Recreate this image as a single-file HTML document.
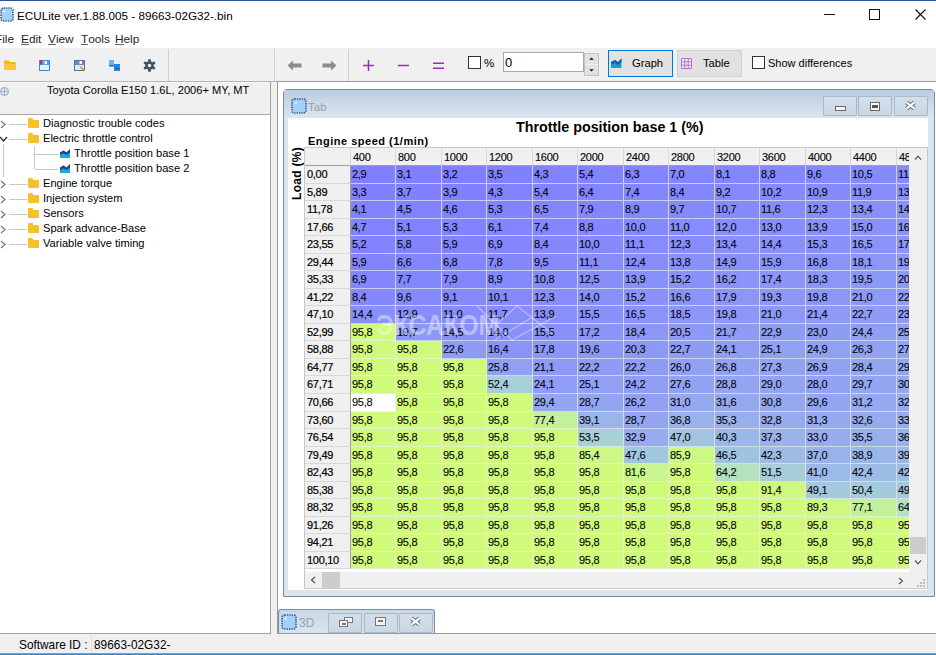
<!DOCTYPE html>
<html><head><meta charset="utf-8">
<style>
*{box-sizing:border-box}
html,body{margin:0;padding:0}
body{width:936px;height:655px;overflow:hidden;position:relative;background:#fff;font-family:"Liberation Sans",sans-serif;color:#000}
.a{position:absolute}
.t{position:absolute;white-space:pre;line-height:1}
/* title */
#topline{left:0;top:0;width:936px;height:1px;background:#2d5193}
.ico{position:absolute;background:#9cc8f4;border:1.5px dotted #3e5f8e;border-radius:3px}
#title{left:17px;top:10px;font-size:11.7px;color:#000}
/* menu */
.menu{top:34px;font-size:11.8px;color:#1e1e1e}
.menu u{text-decoration:none;border-bottom:1px solid #666;display:inline-block;line-height:10px}
/* toolbar */
#toolbar{left:0;top:48px;width:936px;height:33px;background:#f0f0f0}
#tbline{left:0;top:81px;width:936px;height:1px;background:#b4b4b4}
.sep{position:absolute;top:49px;width:1px;height:32px;background:#cfcfcf}
/* left panel */
#lp{left:0;top:82px;width:271px;height:552px;background:#fff;border-right:1px solid #a0a0a0;border-bottom:1px solid #a0a0a0}
#lph{left:0;top:82px;width:270px;height:33px;background:#f0f0f0;border-bottom:1px solid #a8a8a8;border-top:1px solid #fafafa}
.tree{position:absolute;font-size:11.1px;color:#000;white-space:pre;line-height:1}
.fold{position:absolute;width:11px;height:8px;background:#f6c026;border-radius:1px}
.fold:before{content:"";position:absolute;left:0;top:-2px;width:5px;height:3px;background:#f6c026;border-radius:1px 1px 0 0}
.hl{position:absolute;height:1px;background:#c8c8c8}
.vl{position:absolute;width:1px;background:#c8c8c8}
/* splitter */
#split{left:271px;top:82px;width:6px;height:552px;background:#f0f0f0}
/* MDI */
#mdi{left:277px;top:81px;width:660px;height:553px;background:#fff;border:1px solid #9a9a9a;border-right:none}
#status{left:0;top:634px;width:936px;height:20px;background:#f0f0f0}
#botline{left:0;top:653px;width:936px;height:2px;background:linear-gradient(#8fb3da,#2a6db5)}
/* child */
#child{left:283px;top:89px;width:652px;height:508px;border:1px solid #7a8a9c;border-radius:4px 4px 0 0;background:#d9e5f1}
#ctitle{left:284px;top:90px;width:650px;height:28px;background:linear-gradient(#bccde0,#dae5f0)}
#content{left:288px;top:118px;width:640px;height:472px;background:#fff}
.cbtn{position:absolute;top:96px;height:20px;border:1px solid #a9b9ca;border-radius:1px;background:linear-gradient(#d3dfeb,#c9d7e5)}
/* table */
#tv{left:304px;top:147px;width:624px;height:442px;border:1px solid #c8c8c8;background:#fff;overflow:hidden}
#grid{position:absolute;left:0;top:0;width:604px;height:423px;overflow:hidden}
.rh{position:absolute;-webkit-text-stroke:.2px #000;left:0;width:46px;background:#f0f0f0;border-bottom:1px solid #d8d8d8;border-right:1px solid #a0a0a0;font-size:11px;letter-spacing:-.3px;padding:2px 0 0 2px;line-height:12px;white-space:pre;color:#000}
.c{position:absolute;-webkit-text-stroke:.1px #101030;border-right:1px solid rgba(235,235,235,.7);border-bottom:1px solid rgba(235,235,235,.7);font-size:11px;letter-spacing:-.3px;padding:2px 0 0 1px;line-height:12px;white-space:pre;color:#000}
.ch{position:absolute;-webkit-text-stroke:.15px #222;top:0;height:18px;background:#f0f0f0;border-right:1px solid #d8d8d8;border-bottom:1px solid #a0a0a0;font-size:11px;letter-spacing:-.3px;padding:3px 0 0 2px;line-height:12px;white-space:pre;color:#000}
#corner{left:0;top:0;width:46px;height:18px;background:#f0f0f0;border-right:1px solid #d8d8d8;border-bottom:1px solid #a0a0a0}
#vsb{left:604px;top:0;width:18px;height:423px;background:#f0f0f0}
#hsb{left:0;top:423px;width:604px;height:17px;background:#f0f0f0;border-top:1px solid #fff}
#sbcorner{left:604px;top:423px;width:18px;height:17px;background:#f0f0f0}
</style></head><body>
<div class="a" id="topline"></div>
<svg class="a" style="left:0px;top:7px" width="14" height="15" viewBox="0 0 14 15"><rect x="1" y="1" width="12" height="13" rx="2.5" fill="#a4d0fa" stroke="#3d5f92" stroke-width="1.7" stroke-dasharray="1.4 1"/><circle cx="4.2" cy="4.5" r="1.2" fill="#d8ecff"/></svg>
<div class="t" id="title">ECULite ver.1.88.005 - 89663-02G32-.bin</div>
<!-- window buttons -->
<div class="a" style="left:824px;top:14px;width:11px;height:1px;background:#111"></div>
<div class="a" style="left:869px;top:9px;width:11px;height:11px;border:1px solid #111"></div>
<svg class="a" style="left:915px;top:9px" width="11" height="11" viewBox="0 0 11 11"><path d="M0.5 0.5L10.5 10.5M10.5 0.5L0.5 10.5" stroke="#111" stroke-width="1.1"/></svg>
<!-- menu -->
<div class="t menu" style="left:-5px">F<span style="opacity:1">ile</span></div>
<div class="t menu" style="left:21px"><u>E</u>dit</div>
<div class="t menu" style="left:48px"><u>V</u>iew</div>
<div class="t menu" style="left:81px"><u>T</u>ools</div>
<div class="t menu" style="left:115px"><u>H</u>elp</div>
<!-- toolbar -->
<div class="a" id="toolbar"></div>
<div class="a" id="tbline"></div>
<div class="sep" style="left:168px"></div>
<div class="sep" style="left:274px"></div>
<div class="sep" style="left:348px"></div>
<!-- left toolbar icons -->
<svg class="a" style="left:3px;top:59px" width="14" height="12" viewBox="0 0 14 12"><path d="M1 2.5Q1 1.5 2 1.5H5.5L7 3H12Q13 3 13 4V10.5Q13 11 12.5 11H1.5Q1 11 1 10.5Z" fill="#f5b70f"/><path d="M1 5H13V10.5Q13 11 12.5 11H1.5Q1 11 1 10.5Z" fill="#fbc83a"/></svg>
<svg class="a" style="left:38px;top:59px" width="13" height="13" viewBox="0 0 13 13"><rect x="1.5" y="1.5" width="10" height="10" fill="#e8f2fb" stroke="#3d8ad4"/><rect x="2" y="2" width="9" height="4" fill="#5a9fe0"/><rect x="2" y="1" width="2" height="4.5" fill="#c8303a"/><rect x="6.5" y="2" width="2.5" height="3" fill="#f4f4f4"/><rect x="2" y="7" width="9" height="4" fill="#f2ecec"/></svg>
<svg class="a" style="left:73px;top:59px" width="13" height="13" viewBox="0 0 13 13"><rect x="1.5" y="1.5" width="10" height="10" fill="#dde9f4" stroke="#4f74a0"/><rect x="2" y="2" width="9" height="4" fill="#6a8cb4"/><rect x="6.5" y="2" width="2.5" height="3" fill="#f4f4f4"/><path d="M7 7.5L11.5 12" stroke="#c9a227" stroke-width="1.6"/></svg>
<svg class="a" style="left:108px;top:59px" width="13" height="13" viewBox="0 0 13 13"><rect x="1" y="1" width="5" height="7" fill="#6db5ee"/><rect x="6" y="5" width="6" height="7" fill="#2a86da"/><path d="M1.5 6.5H5.5M7 9.5H11" stroke="#1a5a9a" stroke-width="1"/></svg>
<svg class="a" style="left:143px;top:59px" width="13" height="13" viewBox="0 0 14 14"><g fill="#3b5466"><circle cx="7" cy="7" r="4.6"/><rect x="5.5" y="0.3" width="3" height="13.4" rx=".6"/><rect x="5.5" y="0.3" width="3" height="13.4" rx=".6" transform="rotate(60 7 7)"/><rect x="5.5" y="0.3" width="3" height="13.4" rx=".6" transform="rotate(-60 7 7)"/></g><circle cx="7" cy="7" r="1.9" fill="#f0f0f0"/></svg>
<!-- right toolbar -->
<svg class="a" style="left:287px;top:59px" width="15" height="13" viewBox="0 0 15 13"><path d="M0.5 6.5L6 1.5V4.5H14.5V8.5H6V11.5Z" fill="#8c8c8c"/></svg>
<svg class="a" style="left:322px;top:59px" width="15" height="13" viewBox="0 0 15 13"><path d="M14.5 6.5L9 1.5V4.5H0.5V8.5H9V11.5Z" fill="#8c8c8c"/></svg>
<svg class="a" style="left:362px;top:59px" width="13" height="13" viewBox="0 0 13 13"><path d="M6.5 1V12M1 6.5H12" stroke="#9a2cc4" stroke-width="1.5"/></svg>
<svg class="a" style="left:397px;top:59px" width="13" height="13" viewBox="0 0 13 13"><path d="M1 6.5H12" stroke="#9a2cc4" stroke-width="1.5"/></svg>
<svg class="a" style="left:432px;top:59px" width="13" height="13" viewBox="0 0 13 13"><path d="M1 4.2H12M1 9.2H12" stroke="#9a2cc4" stroke-width="1.5"/></svg>
<div class="a" style="left:468px;top:56px;width:13px;height:13px;border:1px solid #333;background:#fff"></div>
<div class="t" style="left:484px;top:58px;font-size:11.5px">%</div>
<div class="a" style="left:503px;top:52px;width:81px;height:20px;border:1px solid #a8a8a8;background:#fff"></div>
<div class="t" style="left:505px;top:56px;font-size:13px">0</div>
<div class="a" style="left:584px;top:53px;width:15px;height:23px;background:#e2e2e2;border:1px solid #c2c2c2"></div>
<div class="a" style="left:585px;top:64px;width:13px;height:1px;background:#efefef"></div>
<svg class="a" style="left:588px;top:57px" width="7" height="16" viewBox="0 0 7 16"><path d="M1.2 2.8L3.5 0.6L5.8 2.8Z M1.2 12.2L3.5 14.4L5.8 12.2Z" fill="#111"/></svg>
<div class="a" style="left:608px;top:50px;width:65px;height:27px;border:1px solid #0078d7;background:#e2e2e2"></div>
<svg class="a" style="left:611px;top:58px" width="11" height="10" viewBox="0 0 11 10"><path d="M0 4L4 2L7 4L10.5 0.5V10H0Z" fill="#1aa0c8"/><path d="M0 4L4 2L7 4L10.5 0.5V4L7 7L4 5L0 7Z" fill="#1f5fa8"/></svg>
<div class="t" style="left:632px;top:58px;font-size:11.2px">Graph</div>
<div class="a" style="left:677px;top:50px;width:65px;height:27px;border:1px solid #d0d0d0;background:#e1e1e1"></div>
<svg class="a" style="left:681px;top:58px" width="11" height="11" viewBox="0 0 11 11"><rect x="0.5" y="0.5" width="10" height="10" fill="#f4ecfb"/><path d="M0.5 0.5H10.5V10.5H0.5Z M0.5 3.8H10.5M0.5 7.2H10.5M3.8 0.5V10.5M7.2 0.5V10.5" stroke="#a866d8" fill="none" stroke-width=".9"/></svg>
<div class="t" style="left:703px;top:58px;font-size:11.2px">Table</div>
<div class="a" style="left:752px;top:56px;width:13px;height:13px;border:1px solid #333;background:#fff"></div>
<div class="t" style="left:768px;top:58px;font-size:11px">Show differences</div>
<!-- left panel -->
<div class="a" id="lp"></div>
<div class="a" id="lph"></div>
<svg class="a" style="left:0;top:86px" width="10" height="11" viewBox="0 0 10 11"><circle cx="4.5" cy="5.5" r="4" fill="#dde3f0" stroke="#9aa6c8"/><path d="M4.5 2V9M1 5.5H8" stroke="#9aa6c8" stroke-width=".8"/></svg>
<div class="t" style="left:47px;top:85px;font-size:11.1px">Toyota Corolla E150 1.6L, 2006+ MY, MT</div>
<svg class="a" style="left:0;top:120px" width="6" height="9" viewBox="0 0 6 9"><path d="M1 1L5 4.5L1 8" stroke="#777" stroke-width="1.2" fill="none"/></svg>
<div class="hl" style="left:9px;top:124px;width:18px"></div>
<div class="fold" style="left:28px;top:120px"></div>
<div class="tree" style="left:43px;top:118px">Diagnostic trouble codes</div>
<svg class="a" style="left:-1px;top:136px" width="9" height="6" viewBox="0 0 9 6"><path d="M1 1L4.5 5L8 1" stroke="#333" stroke-width="1.4" fill="none"/></svg>
<div class="hl" style="left:9px;top:139px;width:18px"></div>
<div class="fold" style="left:28px;top:135px"></div>
<div class="tree" style="left:43px;top:133px">Electric throttle control</div>
<div class="hl" style="left:35px;top:154px;width:23px"></div>
<svg class="a" style="left:60px;top:149px" width="10" height="9" viewBox="0 0 10 9"><path d="M0 3.5L3.5 1.5L6.5 3.5L10 0V9H0Z" fill="#18aad6"/><path d="M0 3.5L3.5 1.5L6.5 3.5L10 0V3.5L6.5 6L3.5 4.5L0 6Z" fill="#27408e"/></svg>
<div class="tree" style="left:74px;top:148px">Throttle position base 1</div>
<div class="hl" style="left:35px;top:169px;width:23px"></div>
<svg class="a" style="left:60px;top:164px" width="10" height="9" viewBox="0 0 10 9"><path d="M0 3.5L3.5 1.5L6.5 3.5L10 0V9H0Z" fill="#18aad6"/><path d="M0 3.5L3.5 1.5L6.5 3.5L10 0V3.5L6.5 6L3.5 4.5L0 6Z" fill="#27408e"/></svg>
<div class="tree" style="left:74px;top:163px">Throttle position base 2</div>
<svg class="a" style="left:0;top:180px" width="6" height="9" viewBox="0 0 6 9"><path d="M1 1L5 4.5L1 8" stroke="#777" stroke-width="1.2" fill="none"/></svg>
<div class="hl" style="left:9px;top:184px;width:18px"></div>
<div class="fold" style="left:28px;top:180px"></div>
<div class="tree" style="left:43px;top:178px">Engine torque</div>
<svg class="a" style="left:0;top:195px" width="6" height="9" viewBox="0 0 6 9"><path d="M1 1L5 4.5L1 8" stroke="#777" stroke-width="1.2" fill="none"/></svg>
<div class="hl" style="left:9px;top:199px;width:18px"></div>
<div class="fold" style="left:28px;top:195px"></div>
<div class="tree" style="left:43px;top:193px">Injection system</div>
<svg class="a" style="left:0;top:210px" width="6" height="9" viewBox="0 0 6 9"><path d="M1 1L5 4.5L1 8" stroke="#777" stroke-width="1.2" fill="none"/></svg>
<div class="hl" style="left:9px;top:214px;width:18px"></div>
<div class="fold" style="left:28px;top:210px"></div>
<div class="tree" style="left:43px;top:208px">Sensors</div>
<svg class="a" style="left:0;top:225px" width="6" height="9" viewBox="0 0 6 9"><path d="M1 1L5 4.5L1 8" stroke="#777" stroke-width="1.2" fill="none"/></svg>
<div class="hl" style="left:9px;top:229px;width:18px"></div>
<div class="fold" style="left:28px;top:225px"></div>
<div class="tree" style="left:43px;top:223px">Spark advance-Base</div>
<svg class="a" style="left:0;top:240px" width="6" height="9" viewBox="0 0 6 9"><path d="M1 1L5 4.5L1 8" stroke="#777" stroke-width="1.2" fill="none"/></svg>
<div class="hl" style="left:9px;top:244px;width:18px"></div>
<div class="fold" style="left:28px;top:240px"></div>
<div class="tree" style="left:43px;top:238px">Variable valve timing</div>
<div class="vl" style="left:3px;top:144px;height:33px"></div>
<div class="vl" style="left:34px;top:146px;height:23px"></div>
<div class="a" id="split"></div>
<!-- MDI -->
<div class="a" id="mdi"></div>
<div class="a" id="child"></div>
<div class="a" id="ctitle"></div>
<svg class="a" style="left:291px;top:98px" width="16" height="16" viewBox="0 0 16 16"><rect x="1" y="1" width="14" height="14" rx="2.5" fill="#a4d0fa" stroke="#3d5f92" stroke-width="1.7" stroke-dasharray="1.4 1"/><circle cx="4.8" cy="4.8" r="1.2" fill="#d8ecff"/></svg>
<div class="t" style="left:308px;top:102px;font-size:11.5px;color:#a0a0a0">Tab</div>
<div class="cbtn" style="left:823px;width:34px"></div>
<div class="cbtn" style="left:858px;width:34px"></div>
<div class="cbtn" style="left:894px;width:34px"></div>
<div class="a" style="left:835px;top:106px;width:11px;height:5px;border:1px solid #6a6a6a;background:#f4f4f4"></div>
<div class="a" style="left:870px;top:102px;width:10px;height:9px;border:1px solid #6a6a6a;background:#f8f8f8"></div>
<div class="a" style="left:872px;top:105px;width:6px;height:3px;background:#555"></div>
<svg class="a" style="left:904px;top:100px" width="13" height="11" viewBox="0 0 13 11"><path d="M2.6 2.4L10.4 8.6M10.4 2.4L2.6 8.6" stroke="#666" stroke-width="4"/><path d="M2.6 2.4L10.4 8.6M10.4 2.4L2.6 8.6" stroke="#fff" stroke-width="2.2"/></svg>
<div class="a" id="content"></div>
<div class="t" style="left:516px;top:120px;font-size:14.3px;font-weight:bold">Throttle position base 1 (%)</div>
<div class="t" style="left:308px;top:136px;font-size:11px;font-weight:bold;letter-spacing:.5px">Engine speed (1/min)</div>
<div class="t" style="left:291px;top:200px;font-size:12px;letter-spacing:.3px;font-weight:bold;transform:rotate(-90deg);transform-origin:0 0">Load (%)</div>
<div class="a" id="tv">
 <div id="grid">
<div class="rh" style="top:18px;height:18px">0,00</div>
<div class="c" style="left:46px;top:18px;width:45px;height:18px;background:#8080ff">2,9</div>
<div class="c" style="left:91px;top:18px;width:46px;height:18px;background:#8080ff">3,1</div>
<div class="c" style="left:137px;top:18px;width:45px;height:18px;background:#8080ff">3,2</div>
<div class="c" style="left:182px;top:18px;width:46px;height:18px;background:#8081ff">3,5</div>
<div class="c" style="left:228px;top:18px;width:45px;height:18px;background:#8182fe">4,3</div>
<div class="c" style="left:273px;top:18px;width:46px;height:18px;background:#8284fe">5,4</div>
<div class="c" style="left:319px;top:18px;width:45px;height:18px;background:#8285fd">6,3</div>
<div class="c" style="left:364px;top:18px;width:46px;height:18px;background:#8386fd">7,0</div>
<div class="c" style="left:410px;top:18px;width:45px;height:18px;background:#8487fc">8,1</div>
<div class="c" style="left:455px;top:18px;width:46px;height:18px;background:#8488fc">8,8</div>
<div class="c" style="left:501px;top:18px;width:45px;height:18px;background:#858afb">9,6</div>
<div class="c" style="left:546px;top:18px;width:46px;height:18px;background:#858bfb">10,5</div>
<div class="c" style="left:592px;top:18px;width:45px;height:18px;background:#868cfa">11,6</div>
<div class="rh" style="top:36px;height:17px">5,89</div>
<div class="c" style="left:46px;top:36px;width:45px;height:17px;background:#8081ff">3,3</div>
<div class="c" style="left:91px;top:36px;width:46px;height:17px;background:#8181ff">3,7</div>
<div class="c" style="left:137px;top:36px;width:45px;height:17px;background:#8181fe">3,9</div>
<div class="c" style="left:182px;top:36px;width:46px;height:17px;background:#8182fe">4,3</div>
<div class="c" style="left:228px;top:36px;width:45px;height:17px;background:#8284fe">5,4</div>
<div class="c" style="left:273px;top:36px;width:46px;height:17px;background:#8385fd">6,4</div>
<div class="c" style="left:319px;top:36px;width:45px;height:17px;background:#8386fd">7,4</div>
<div class="c" style="left:364px;top:36px;width:46px;height:17px;background:#8488fc">8,4</div>
<div class="c" style="left:410px;top:36px;width:45px;height:17px;background:#8589fc">9,2</div>
<div class="c" style="left:455px;top:36px;width:46px;height:17px;background:#858afb">10,2</div>
<div class="c" style="left:501px;top:36px;width:45px;height:17px;background:#868bfb">10,9</div>
<div class="c" style="left:546px;top:36px;width:46px;height:17px;background:#868dfa">11,9</div>
<div class="c" style="left:592px;top:36px;width:45px;height:17px;background:#878efa">13,0</div>
<div class="rh" style="top:53px;height:18px">11,78</div>
<div class="c" style="left:46px;top:53px;width:45px;height:18px;background:#8182fe">4,1</div>
<div class="c" style="left:91px;top:53px;width:46px;height:18px;background:#8182fe">4,5</div>
<div class="c" style="left:137px;top:53px;width:45px;height:18px;background:#8182fe">4,6</div>
<div class="c" style="left:182px;top:53px;width:46px;height:18px;background:#8283fe">5,3</div>
<div class="c" style="left:228px;top:53px;width:45px;height:18px;background:#8385fd">6,5</div>
<div class="c" style="left:273px;top:53px;width:46px;height:18px;background:#8487fc">7,9</div>
<div class="c" style="left:319px;top:53px;width:45px;height:18px;background:#8489fc">8,9</div>
<div class="c" style="left:364px;top:53px;width:46px;height:18px;background:#858afb">9,7</div>
<div class="c" style="left:410px;top:53px;width:45px;height:18px;background:#868bfb">10,7</div>
<div class="c" style="left:455px;top:53px;width:46px;height:18px;background:#868cfa">11,6</div>
<div class="c" style="left:501px;top:53px;width:45px;height:18px;background:#878dfa">12,3</div>
<div class="c" style="left:546px;top:53px;width:46px;height:18px;background:#888ff9">13,4</div>
<div class="c" style="left:592px;top:53px;width:45px;height:18px;background:#8891f9">14,5</div>
<div class="rh" style="top:71px;height:17px">17,66</div>
<div class="c" style="left:46px;top:71px;width:45px;height:17px;background:#8183fe">4,7</div>
<div class="c" style="left:91px;top:71px;width:46px;height:17px;background:#8283fe">5,1</div>
<div class="c" style="left:137px;top:71px;width:45px;height:17px;background:#8283fe">5,3</div>
<div class="c" style="left:182px;top:71px;width:46px;height:17px;background:#8285fd">6,1</div>
<div class="c" style="left:228px;top:71px;width:45px;height:17px;background:#8386fd">7,4</div>
<div class="c" style="left:273px;top:71px;width:46px;height:17px;background:#8488fc">8,8</div>
<div class="c" style="left:319px;top:71px;width:45px;height:17px;background:#858afb">10,0</div>
<div class="c" style="left:364px;top:71px;width:46px;height:17px;background:#868cfb">11,0</div>
<div class="c" style="left:410px;top:71px;width:45px;height:17px;background:#878dfa">12,0</div>
<div class="c" style="left:455px;top:71px;width:46px;height:17px;background:#878efa">13,0</div>
<div class="c" style="left:501px;top:71px;width:45px;height:17px;background:#8890f9">13,9</div>
<div class="c" style="left:546px;top:71px;width:46px;height:17px;background:#8991f8">15,0</div>
<div class="c" style="left:592px;top:71px;width:45px;height:17px;background:#8993f8">16,1</div>
<div class="rh" style="top:88px;height:18px">23,55</div>
<div class="c" style="left:46px;top:88px;width:45px;height:18px;background:#8283fe">5,2</div>
<div class="c" style="left:91px;top:88px;width:46px;height:18px;background:#8284fd">5,8</div>
<div class="c" style="left:137px;top:88px;width:45px;height:18px;background:#8284fd">5,9</div>
<div class="c" style="left:182px;top:88px;width:46px;height:18px;background:#8386fd">6,9</div>
<div class="c" style="left:228px;top:88px;width:45px;height:18px;background:#8488fc">8,4</div>
<div class="c" style="left:273px;top:88px;width:46px;height:18px;background:#858afb">10,0</div>
<div class="c" style="left:319px;top:88px;width:45px;height:18px;background:#868cfb">11,1</div>
<div class="c" style="left:364px;top:88px;width:46px;height:18px;background:#878dfa">12,3</div>
<div class="c" style="left:410px;top:88px;width:45px;height:18px;background:#888ff9">13,4</div>
<div class="c" style="left:455px;top:88px;width:46px;height:18px;background:#8891f9">14,4</div>
<div class="c" style="left:501px;top:88px;width:45px;height:18px;background:#8992f8">15,3</div>
<div class="c" style="left:546px;top:88px;width:46px;height:18px;background:#8a94f8">16,5</div>
<div class="c" style="left:592px;top:88px;width:45px;height:18px;background:#8b95f7">17,7</div>
<div class="rh" style="top:106px;height:17px">29,44</div>
<div class="c" style="left:46px;top:106px;width:45px;height:17px;background:#8284fd">5,9</div>
<div class="c" style="left:91px;top:106px;width:46px;height:17px;background:#8385fd">6,6</div>
<div class="c" style="left:137px;top:106px;width:45px;height:17px;background:#8386fd">6,8</div>
<div class="c" style="left:182px;top:106px;width:46px;height:17px;background:#8487fc">7,8</div>
<div class="c" style="left:228px;top:106px;width:45px;height:17px;background:#8589fb">9,5</div>
<div class="c" style="left:273px;top:106px;width:46px;height:17px;background:#868cfb">11,1</div>
<div class="c" style="left:319px;top:106px;width:45px;height:17px;background:#878efa">12,4</div>
<div class="c" style="left:364px;top:106px;width:46px;height:17px;background:#8890f9">13,8</div>
<div class="c" style="left:410px;top:106px;width:45px;height:17px;background:#8991f9">14,9</div>
<div class="c" style="left:455px;top:106px;width:46px;height:17px;background:#8993f8">15,9</div>
<div class="c" style="left:501px;top:106px;width:45px;height:17px;background:#8a94f8">16,8</div>
<div class="c" style="left:546px;top:106px;width:46px;height:17px;background:#8b96f7">18,1</div>
<div class="c" style="left:592px;top:106px;width:45px;height:17px;background:#8c98f6">19,3</div>
<div class="rh" style="top:123px;height:18px">35,33</div>
<div class="c" style="left:46px;top:123px;width:45px;height:18px;background:#8386fd">6,9</div>
<div class="c" style="left:91px;top:123px;width:46px;height:18px;background:#8387fc">7,7</div>
<div class="c" style="left:137px;top:123px;width:45px;height:18px;background:#8487fc">7,9</div>
<div class="c" style="left:182px;top:123px;width:46px;height:18px;background:#8489fc">8,9</div>
<div class="c" style="left:228px;top:123px;width:45px;height:18px;background:#868bfb">10,8</div>
<div class="c" style="left:273px;top:123px;width:46px;height:18px;background:#878efa">12,5</div>
<div class="c" style="left:319px;top:123px;width:45px;height:18px;background:#8890f9">13,9</div>
<div class="c" style="left:364px;top:123px;width:46px;height:18px;background:#8992f8">15,2</div>
<div class="c" style="left:410px;top:123px;width:45px;height:18px;background:#8a93f8">16,2</div>
<div class="c" style="left:455px;top:123px;width:46px;height:18px;background:#8a95f7">17,4</div>
<div class="c" style="left:501px;top:123px;width:45px;height:18px;background:#8b96f7">18,3</div>
<div class="c" style="left:546px;top:123px;width:46px;height:18px;background:#8c98f6">19,5</div>
<div class="c" style="left:592px;top:123px;width:45px;height:18px;background:#8d9af5">20,8</div>
<div class="rh" style="top:141px;height:17px">41,22</div>
<div class="c" style="left:46px;top:141px;width:45px;height:17px;background:#8488fc">8,4</div>
<div class="c" style="left:91px;top:141px;width:46px;height:17px;background:#858afb">9,6</div>
<div class="c" style="left:137px;top:141px;width:45px;height:17px;background:#8489fc">9,1</div>
<div class="c" style="left:182px;top:141px;width:46px;height:17px;background:#858afb">10,1</div>
<div class="c" style="left:228px;top:141px;width:45px;height:17px;background:#878dfa">12,3</div>
<div class="c" style="left:273px;top:141px;width:46px;height:17px;background:#8890f9">14,0</div>
<div class="c" style="left:319px;top:141px;width:45px;height:17px;background:#8992f8">15,2</div>
<div class="c" style="left:364px;top:141px;width:46px;height:17px;background:#8a94f8">16,6</div>
<div class="c" style="left:410px;top:141px;width:45px;height:17px;background:#8b96f7">17,9</div>
<div class="c" style="left:455px;top:141px;width:46px;height:17px;background:#8c98f6">19,3</div>
<div class="c" style="left:501px;top:141px;width:45px;height:17px;background:#8c98f6">19,8</div>
<div class="c" style="left:546px;top:141px;width:46px;height:17px;background:#8d9af5">21,0</div>
<div class="c" style="left:592px;top:141px;width:45px;height:17px;background:#8e9cf5">22,4</div>
<div class="rh" style="top:158px;height:18px">47,10</div>
<div class="c" style="left:46px;top:158px;width:45px;height:18px;background:#8891f9">14,4</div>
<div class="c" style="left:91px;top:158px;width:46px;height:18px;background:#878efa">12,9</div>
<div class="c" style="left:137px;top:158px;width:45px;height:18px;background:#868cfb">11,0</div>
<div class="c" style="left:182px;top:158px;width:46px;height:18px;background:#868dfa">11,7</div>
<div class="c" style="left:228px;top:158px;width:45px;height:18px;background:#8890f9">13,9</div>
<div class="c" style="left:273px;top:158px;width:46px;height:18px;background:#8992f8">15,5</div>
<div class="c" style="left:319px;top:158px;width:45px;height:18px;background:#8a94f8">16,5</div>
<div class="c" style="left:364px;top:158px;width:46px;height:18px;background:#8b96f7">18,5</div>
<div class="c" style="left:410px;top:158px;width:45px;height:18px;background:#8c98f6">19,8</div>
<div class="c" style="left:455px;top:158px;width:46px;height:18px;background:#8d9af5">21,0</div>
<div class="c" style="left:501px;top:158px;width:45px;height:18px;background:#8d9bf5">21,4</div>
<div class="c" style="left:546px;top:158px;width:46px;height:18px;background:#8e9cf4">22,7</div>
<div class="c" style="left:592px;top:158px;width:45px;height:18px;background:#8f9ef4">23,9</div>
<div class="rh" style="top:176px;height:17px">52,99</div>
<div class="c" style="left:46px;top:176px;width:45px;height:17px;background:#d0fa7a">95,8</div>
<div class="c" style="left:91px;top:176px;width:46px;height:17px;background:#8c98f6">19,7</div>
<div class="c" style="left:137px;top:176px;width:45px;height:17px;background:#8891f9">14,5</div>
<div class="c" style="left:182px;top:176px;width:46px;height:17px;background:#8890f9">14,0</div>
<div class="c" style="left:228px;top:176px;width:45px;height:17px;background:#8992f8">15,5</div>
<div class="c" style="left:273px;top:176px;width:46px;height:17px;background:#8a95f7">17,2</div>
<div class="c" style="left:319px;top:176px;width:45px;height:17px;background:#8b96f7">18,4</div>
<div class="c" style="left:364px;top:176px;width:46px;height:17px;background:#8d99f6">20,5</div>
<div class="c" style="left:410px;top:176px;width:45px;height:17px;background:#8d9bf5">21,7</div>
<div class="c" style="left:455px;top:176px;width:46px;height:17px;background:#8e9df4">22,9</div>
<div class="c" style="left:501px;top:176px;width:45px;height:17px;background:#8e9df4">23,0</div>
<div class="c" style="left:546px;top:176px;width:46px;height:17px;background:#8f9ff3">24,4</div>
<div class="c" style="left:592px;top:176px;width:45px;height:17px;background:#90a1f3">25,7</div>
<div class="rh" style="top:193px;height:18px">58,88</div>
<div class="c" style="left:46px;top:193px;width:45px;height:18px;background:#d0fa7a">95,8</div>
<div class="c" style="left:91px;top:193px;width:46px;height:18px;background:#d0fa7a">95,8</div>
<div class="c" style="left:137px;top:193px;width:45px;height:18px;background:#8e9cf4">22,6</div>
<div class="c" style="left:182px;top:193px;width:46px;height:18px;background:#8a93f8">16,4</div>
<div class="c" style="left:228px;top:193px;width:45px;height:18px;background:#8b95f7">17,8</div>
<div class="c" style="left:273px;top:193px;width:46px;height:18px;background:#8c98f6">19,6</div>
<div class="c" style="left:319px;top:193px;width:45px;height:18px;background:#8c99f6">20,3</div>
<div class="c" style="left:364px;top:193px;width:46px;height:18px;background:#8e9cf4">22,7</div>
<div class="c" style="left:410px;top:193px;width:45px;height:18px;background:#8f9ef4">24,1</div>
<div class="c" style="left:455px;top:193px;width:46px;height:18px;background:#90a0f3">25,1</div>
<div class="c" style="left:501px;top:193px;width:45px;height:18px;background:#90a0f3">24,9</div>
<div class="c" style="left:546px;top:193px;width:46px;height:18px;background:#91a2f2">26,3</div>
<div class="c" style="left:592px;top:193px;width:45px;height:18px;background:#92a3f2">27,6</div>
<div class="rh" style="top:211px;height:17px">64,77</div>
<div class="c" style="left:46px;top:211px;width:45px;height:17px;background:#d0fa7a">95,8</div>
<div class="c" style="left:91px;top:211px;width:46px;height:17px;background:#d0fa7a">95,8</div>
<div class="c" style="left:137px;top:211px;width:45px;height:17px;background:#d0fa7a">95,8</div>
<div class="c" style="left:182px;top:211px;width:46px;height:17px;background:#90a1f3">25,8</div>
<div class="c" style="left:228px;top:211px;width:45px;height:17px;background:#8d9af5">21,1</div>
<div class="c" style="left:273px;top:211px;width:46px;height:17px;background:#8e9cf5">22,2</div>
<div class="c" style="left:319px;top:211px;width:45px;height:17px;background:#8e9cf5">22,2</div>
<div class="c" style="left:364px;top:211px;width:46px;height:17px;background:#91a1f3">26,0</div>
<div class="c" style="left:410px;top:211px;width:45px;height:17px;background:#91a2f2">26,8</div>
<div class="c" style="left:455px;top:211px;width:46px;height:17px;background:#92a3f2">27,3</div>
<div class="c" style="left:501px;top:211px;width:45px;height:17px;background:#91a2f2">26,9</div>
<div class="c" style="left:546px;top:211px;width:46px;height:17px;background:#92a5f1">28,4</div>
<div class="c" style="left:592px;top:211px;width:45px;height:17px;background:#93a7f1">29,8</div>
<div class="rh" style="top:228px;height:18px">67,71</div>
<div class="c" style="left:46px;top:228px;width:45px;height:18px;background:#d0fa7a">95,8</div>
<div class="c" style="left:91px;top:228px;width:46px;height:18px;background:#d0fa7a">95,8</div>
<div class="c" style="left:137px;top:228px;width:45px;height:18px;background:#d0fa7a">95,8</div>
<div class="c" style="left:182px;top:228px;width:46px;height:18px;background:#a6cfd8">52,4</div>
<div class="c" style="left:228px;top:228px;width:45px;height:18px;background:#8f9ef4">24,1</div>
<div class="c" style="left:273px;top:228px;width:46px;height:18px;background:#90a0f3">25,1</div>
<div class="c" style="left:319px;top:228px;width:45px;height:18px;background:#8f9ff4">24,2</div>
<div class="c" style="left:364px;top:228px;width:46px;height:18px;background:#92a3f2">27,6</div>
<div class="c" style="left:410px;top:228px;width:45px;height:18px;background:#93a5f1">28,8</div>
<div class="c" style="left:455px;top:228px;width:46px;height:18px;background:#93a5f1">29,0</div>
<div class="c" style="left:501px;top:228px;width:45px;height:18px;background:#92a4f1">28,0</div>
<div class="c" style="left:546px;top:228px;width:46px;height:18px;background:#93a6f1">29,7</div>
<div class="c" style="left:592px;top:228px;width:45px;height:18px;background:#94a8f0">30,9</div>
<div class="rh" style="top:246px;height:18px">70,66</div>
<div class="c" style="left:46px;top:246px;width:45px;height:18px;background:#ffffff">95,8</div>
<div class="c" style="left:91px;top:246px;width:46px;height:18px;background:#d0fa7a">95,8</div>
<div class="c" style="left:137px;top:246px;width:45px;height:18px;background:#d0fa7a">95,8</div>
<div class="c" style="left:182px;top:246px;width:46px;height:18px;background:#d0fa7a">95,8</div>
<div class="c" style="left:228px;top:246px;width:45px;height:18px;background:#93a6f1">29,4</div>
<div class="c" style="left:273px;top:246px;width:46px;height:18px;background:#93a5f1">28,7</div>
<div class="c" style="left:319px;top:246px;width:45px;height:18px;background:#91a1f2">26,2</div>
<div class="c" style="left:364px;top:246px;width:46px;height:18px;background:#94a8f0">31,0</div>
<div class="c" style="left:410px;top:246px;width:45px;height:18px;background:#95a9ef">31,6</div>
<div class="c" style="left:455px;top:246px;width:46px;height:18px;background:#94a8f0">30,8</div>
<div class="c" style="left:501px;top:246px;width:45px;height:18px;background:#93a6f1">29,6</div>
<div class="c" style="left:546px;top:246px;width:46px;height:18px;background:#94a9f0">31,2</div>
<div class="c" style="left:592px;top:246px;width:45px;height:18px;background:#95abef">32,5</div>
<div class="rh" style="top:264px;height:17px">73,60</div>
<div class="c" style="left:46px;top:264px;width:45px;height:17px;background:#d0fa7a">95,8</div>
<div class="c" style="left:91px;top:264px;width:46px;height:17px;background:#d0fa7a">95,8</div>
<div class="c" style="left:137px;top:264px;width:45px;height:17px;background:#d0fa7a">95,8</div>
<div class="c" style="left:182px;top:264px;width:46px;height:17px;background:#d0fa7a">95,8</div>
<div class="c" style="left:228px;top:264px;width:45px;height:17px;background:#c3f19a">77,4</div>
<div class="c" style="left:273px;top:264px;width:46px;height:17px;background:#9ab6e9">39,1</div>
<div class="c" style="left:319px;top:264px;width:45px;height:17px;background:#93a5f1">28,7</div>
<div class="c" style="left:364px;top:264px;width:46px;height:17px;background:#98b2eb">36,8</div>
<div class="c" style="left:410px;top:264px;width:45px;height:17px;background:#97b0ec">35,3</div>
<div class="c" style="left:455px;top:264px;width:46px;height:17px;background:#95abee">32,8</div>
<div class="c" style="left:501px;top:264px;width:45px;height:17px;background:#94a9f0">31,3</div>
<div class="c" style="left:546px;top:264px;width:46px;height:17px;background:#95abee">32,6</div>
<div class="c" style="left:592px;top:264px;width:45px;height:17px;background:#96aded">33,8</div>
<div class="rh" style="top:281px;height:18px">76,54</div>
<div class="c" style="left:46px;top:281px;width:45px;height:18px;background:#d0fa7a">95,8</div>
<div class="c" style="left:91px;top:281px;width:46px;height:18px;background:#d0fa7a">95,8</div>
<div class="c" style="left:137px;top:281px;width:45px;height:18px;background:#d0fa7a">95,8</div>
<div class="c" style="left:182px;top:281px;width:46px;height:18px;background:#d0fa7a">95,8</div>
<div class="c" style="left:228px;top:281px;width:45px;height:18px;background:#d0fa7a">95,8</div>
<div class="c" style="left:273px;top:281px;width:46px;height:18px;background:#a7d1d7">53,5</div>
<div class="c" style="left:319px;top:281px;width:45px;height:18px;background:#96acee">32,9</div>
<div class="c" style="left:364px;top:281px;width:46px;height:18px;background:#a0c4e1">47,0</div>
<div class="c" style="left:410px;top:281px;width:45px;height:18px;background:#9bb8e8">40,3</div>
<div class="c" style="left:455px;top:281px;width:46px;height:18px;background:#99b3ea">37,3</div>
<div class="c" style="left:501px;top:281px;width:45px;height:18px;background:#96acee">33,0</div>
<div class="c" style="left:546px;top:281px;width:46px;height:18px;background:#97b0ec">35,5</div>
<div class="c" style="left:592px;top:281px;width:45px;height:18px;background:#98b2eb">36,7</div>
<div class="rh" style="top:299px;height:17px">79,49</div>
<div class="c" style="left:46px;top:299px;width:45px;height:17px;background:#d0fa7a">95,8</div>
<div class="c" style="left:91px;top:299px;width:46px;height:17px;background:#d0fa7a">95,8</div>
<div class="c" style="left:137px;top:299px;width:45px;height:17px;background:#d0fa7a">95,8</div>
<div class="c" style="left:182px;top:299px;width:46px;height:17px;background:#d0fa7a">95,8</div>
<div class="c" style="left:228px;top:299px;width:45px;height:17px;background:#d0fa7a">95,8</div>
<div class="c" style="left:273px;top:299px;width:46px;height:17px;background:#ccf883">85,4</div>
<div class="c" style="left:319px;top:299px;width:45px;height:17px;background:#a1c6e0">47,6</div>
<div class="c" style="left:364px;top:299px;width:46px;height:17px;background:#ccf883">85,9</div>
<div class="c" style="left:410px;top:299px;width:45px;height:17px;background:#a0c3e1">46,5</div>
<div class="c" style="left:455px;top:299px;width:46px;height:17px;background:#9cbce6">42,3</div>
<div class="c" style="left:501px;top:299px;width:45px;height:17px;background:#98b3eb">37,0</div>
<div class="c" style="left:546px;top:299px;width:46px;height:17px;background:#9ab6e9">38,9</div>
<div class="c" style="left:592px;top:299px;width:45px;height:17px;background:#9bb8e8">39,9</div>
<div class="rh" style="top:316px;height:18px">82,43</div>
<div class="c" style="left:46px;top:316px;width:45px;height:18px;background:#d0fa7a">95,8</div>
<div class="c" style="left:91px;top:316px;width:46px;height:18px;background:#d0fa7a">95,8</div>
<div class="c" style="left:137px;top:316px;width:45px;height:18px;background:#d0fa7a">95,8</div>
<div class="c" style="left:182px;top:316px;width:46px;height:18px;background:#d0fa7a">95,8</div>
<div class="c" style="left:228px;top:316px;width:45px;height:18px;background:#d0fa7a">95,8</div>
<div class="c" style="left:273px;top:316px;width:46px;height:18px;background:#d0fa7a">95,8</div>
<div class="c" style="left:319px;top:316px;width:45px;height:18px;background:#c8f58d">81,6</div>
<div class="c" style="left:364px;top:316px;width:46px;height:18px;background:#d0fa7a">95,8</div>
<div class="c" style="left:410px;top:316px;width:45px;height:18px;background:#b4e2c0">64,2</div>
<div class="c" style="left:455px;top:316px;width:46px;height:18px;background:#a5cdda">51,5</div>
<div class="c" style="left:501px;top:316px;width:45px;height:18px;background:#9bbae7">41,0</div>
<div class="c" style="left:546px;top:316px;width:46px;height:18px;background:#9cbce6">42,4</div>
<div class="c" style="left:592px;top:316px;width:45px;height:18px;background:#9dbde6">42,8</div>
<div class="rh" style="top:334px;height:17px">85,38</div>
<div class="c" style="left:46px;top:334px;width:45px;height:17px;background:#d0fa7a">95,8</div>
<div class="c" style="left:91px;top:334px;width:46px;height:17px;background:#d0fa7a">95,8</div>
<div class="c" style="left:137px;top:334px;width:45px;height:17px;background:#d0fa7a">95,8</div>
<div class="c" style="left:182px;top:334px;width:46px;height:17px;background:#d0fa7a">95,8</div>
<div class="c" style="left:228px;top:334px;width:45px;height:17px;background:#d0fa7a">95,8</div>
<div class="c" style="left:273px;top:334px;width:46px;height:17px;background:#d0fa7a">95,8</div>
<div class="c" style="left:319px;top:334px;width:45px;height:17px;background:#d0fa7a">95,8</div>
<div class="c" style="left:364px;top:334px;width:46px;height:17px;background:#d0fa7a">95,8</div>
<div class="c" style="left:410px;top:334px;width:45px;height:17px;background:#d0fa7a">95,8</div>
<div class="c" style="left:455px;top:334px;width:46px;height:17px;background:#cef97e">91,4</div>
<div class="c" style="left:501px;top:334px;width:45px;height:17px;background:#a3c9dd">49,1</div>
<div class="c" style="left:546px;top:334px;width:46px;height:17px;background:#a4cbdb">50,4</div>
<div class="c" style="left:592px;top:334px;width:45px;height:17px;background:#a3c9dd">49,2</div>
<div class="rh" style="top:351px;height:18px">88,32</div>
<div class="c" style="left:46px;top:351px;width:45px;height:18px;background:#d0fa7a">95,8</div>
<div class="c" style="left:91px;top:351px;width:46px;height:18px;background:#d0fa7a">95,8</div>
<div class="c" style="left:137px;top:351px;width:45px;height:18px;background:#d0fa7a">95,8</div>
<div class="c" style="left:182px;top:351px;width:46px;height:18px;background:#d0fa7a">95,8</div>
<div class="c" style="left:228px;top:351px;width:45px;height:18px;background:#d0fa7a">95,8</div>
<div class="c" style="left:273px;top:351px;width:46px;height:18px;background:#d0fa7a">95,8</div>
<div class="c" style="left:319px;top:351px;width:45px;height:18px;background:#d0fa7a">95,8</div>
<div class="c" style="left:364px;top:351px;width:46px;height:18px;background:#d0fa7a">95,8</div>
<div class="c" style="left:410px;top:351px;width:45px;height:18px;background:#d0fa7a">95,8</div>
<div class="c" style="left:455px;top:351px;width:46px;height:18px;background:#d0fa7a">95,8</div>
<div class="c" style="left:501px;top:351px;width:45px;height:18px;background:#cef980">89,3</div>
<div class="c" style="left:546px;top:351px;width:46px;height:18px;background:#c3f19b">77,1</div>
<div class="c" style="left:592px;top:351px;width:45px;height:18px;background:#b4e2c0">64,3</div>
<div class="rh" style="top:369px;height:17px">91,26</div>
<div class="c" style="left:46px;top:369px;width:45px;height:17px;background:#d0fa7a">95,8</div>
<div class="c" style="left:91px;top:369px;width:46px;height:17px;background:#d0fa7a">95,8</div>
<div class="c" style="left:137px;top:369px;width:45px;height:17px;background:#d0fa7a">95,8</div>
<div class="c" style="left:182px;top:369px;width:46px;height:17px;background:#d0fa7a">95,8</div>
<div class="c" style="left:228px;top:369px;width:45px;height:17px;background:#d0fa7a">95,8</div>
<div class="c" style="left:273px;top:369px;width:46px;height:17px;background:#d0fa7a">95,8</div>
<div class="c" style="left:319px;top:369px;width:45px;height:17px;background:#d0fa7a">95,8</div>
<div class="c" style="left:364px;top:369px;width:46px;height:17px;background:#d0fa7a">95,8</div>
<div class="c" style="left:410px;top:369px;width:45px;height:17px;background:#d0fa7a">95,8</div>
<div class="c" style="left:455px;top:369px;width:46px;height:17px;background:#d0fa7a">95,8</div>
<div class="c" style="left:501px;top:369px;width:45px;height:17px;background:#d0fa7a">95,8</div>
<div class="c" style="left:546px;top:369px;width:46px;height:17px;background:#d0fa7a">95,8</div>
<div class="c" style="left:592px;top:369px;width:45px;height:17px;background:#d0fa7a">95,8</div>
<div class="rh" style="top:386px;height:18px">94,21</div>
<div class="c" style="left:46px;top:386px;width:45px;height:18px;background:#d0fa7a">95,8</div>
<div class="c" style="left:91px;top:386px;width:46px;height:18px;background:#d0fa7a">95,8</div>
<div class="c" style="left:137px;top:386px;width:45px;height:18px;background:#d0fa7a">95,8</div>
<div class="c" style="left:182px;top:386px;width:46px;height:18px;background:#d0fa7a">95,8</div>
<div class="c" style="left:228px;top:386px;width:45px;height:18px;background:#d0fa7a">95,8</div>
<div class="c" style="left:273px;top:386px;width:46px;height:18px;background:#d0fa7a">95,8</div>
<div class="c" style="left:319px;top:386px;width:45px;height:18px;background:#d0fa7a">95,8</div>
<div class="c" style="left:364px;top:386px;width:46px;height:18px;background:#d0fa7a">95,8</div>
<div class="c" style="left:410px;top:386px;width:45px;height:18px;background:#d0fa7a">95,8</div>
<div class="c" style="left:455px;top:386px;width:46px;height:18px;background:#d0fa7a">95,8</div>
<div class="c" style="left:501px;top:386px;width:45px;height:18px;background:#d0fa7a">95,8</div>
<div class="c" style="left:546px;top:386px;width:46px;height:18px;background:#d0fa7a">95,8</div>
<div class="c" style="left:592px;top:386px;width:45px;height:18px;background:#d0fa7a">95,8</div>
<div class="rh" style="top:404px;height:17px">100,10</div>
<div class="c" style="left:46px;top:404px;width:45px;height:17px;background:#d0fa7a">95,8</div>
<div class="c" style="left:91px;top:404px;width:46px;height:17px;background:#d0fa7a">95,8</div>
<div class="c" style="left:137px;top:404px;width:45px;height:17px;background:#d0fa7a">95,8</div>
<div class="c" style="left:182px;top:404px;width:46px;height:17px;background:#d0fa7a">95,8</div>
<div class="c" style="left:228px;top:404px;width:45px;height:17px;background:#d0fa7a">95,8</div>
<div class="c" style="left:273px;top:404px;width:46px;height:17px;background:#d0fa7a">95,8</div>
<div class="c" style="left:319px;top:404px;width:45px;height:17px;background:#d0fa7a">95,8</div>
<div class="c" style="left:364px;top:404px;width:46px;height:17px;background:#d0fa7a">95,8</div>
<div class="c" style="left:410px;top:404px;width:45px;height:17px;background:#d0fa7a">95,8</div>
<div class="c" style="left:455px;top:404px;width:46px;height:17px;background:#d0fa7a">95,8</div>
<div class="c" style="left:501px;top:404px;width:45px;height:17px;background:#d0fa7a">95,8</div>
<div class="c" style="left:546px;top:404px;width:46px;height:17px;background:#d0fa7a">95,8</div>
<div class="c" style="left:592px;top:404px;width:45px;height:17px;background:#d0fa7a">95,8</div>
<div class="ch" style="left:46px;width:45px">400</div>
<div class="ch" style="left:91px;width:46px">800</div>
<div class="ch" style="left:137px;width:45px">1000</div>
<div class="ch" style="left:182px;width:46px">1200</div>
<div class="ch" style="left:228px;width:45px">1600</div>
<div class="ch" style="left:273px;width:46px">2000</div>
<div class="ch" style="left:319px;width:45px">2400</div>
<div class="ch" style="left:364px;width:46px">2800</div>
<div class="ch" style="left:410px;width:45px">3200</div>
<div class="ch" style="left:455px;width:46px">3600</div>
<div class="ch" style="left:501px;width:45px">4000</div>
<div class="ch" style="left:546px;width:46px">4400</div>
<div class="ch" style="left:592px;width:45px">4800</div>
 <div class="a" id="corner"></div>
 </div>
 <div class="a" id="vsb"></div>
 <div class="a" id="hsb"></div>
 <div class="a" id="sbcorner"></div>
 <svg class="a" style="left:609px;top:7px" width="8" height="5" viewBox="0 0 8 5"><path d="M1 4.5L4 1.2L7 4.5" stroke="#555" stroke-width="1.2" fill="none"/></svg>
 <div class="a" style="left:605px;top:389px;width:16px;height:17px;background:#cdcdcd"></div>
 <svg class="a" style="left:609px;top:412px" width="8" height="5" viewBox="0 0 8 5"><path d="M1 0.5L4 3.8L7 0.5" stroke="#555" stroke-width="1.2" fill="none"/></svg>
 <svg class="a" style="left:5px;top:428px" width="6" height="8" viewBox="0 0 6 8"><path d="M5 1L1.5 4L5 7" stroke="#555" stroke-width="1.2" fill="none"/></svg>
 <div class="a" style="left:17px;top:424px;width:18px;height:16px;background:#cdcdcd"></div>
 <svg class="a" style="left:593px;top:429px" width="6" height="8" viewBox="0 0 6 8"><path d="M1 1L4.5 4L1 7" stroke="#555" stroke-width="1.2" fill="none"/></svg>
 <svg class="a" style="left:611px;top:430px" width="10" height="10" viewBox="0 0 10 10"><g fill="#bdbdbd"><rect x="7" y="1" width="2" height="2"/><rect x="4" y="4" width="2" height="2"/><rect x="7" y="4" width="2" height="2"/><rect x="1" y="7" width="2" height="2"/><rect x="4" y="7" width="2" height="2"/><rect x="7" y="7" width="2" height="2"/></g></svg>
</div>
<!-- watermark -->
<div class="t" style="left:376px;top:310px;font-size:30px;font-weight:bold;color:rgba(255,255,255,.42);transform:scaleX(.83);transform-origin:0 0">ЭКСАКОМ</div>
<svg class="a" style="left:455px;top:296px" width="110" height="55" viewBox="455 296 110 55"><g stroke="rgba(255,255,255,.4)" stroke-width="1.2" fill="none"><path d="M477 306L512 340L556 316"/><path d="M517 306L553 334"/><path d="M498 323L517 306"/><path d="M495 340L531 318"/></g></svg>
<!-- minimized 3D -->
<div class="a" style="left:278px;top:609px;width:157px;height:24px;border:1px solid #7e8e9e;border-bottom:none;border-radius:3px 3px 0 0;background:linear-gradient(#c9d8e7,#d8e4ef)"></div>
<svg class="a" style="left:281px;top:614px" width="16" height="16" viewBox="0 0 16 16"><rect x="1" y="1" width="14" height="14" rx="2.5" fill="#a4d0fa" stroke="#3d5f92" stroke-width="1.7" stroke-dasharray="1.4 1"/><circle cx="4.8" cy="4.8" r="1.2" fill="#d8ecff"/></svg>
<div class="t" style="left:299px;top:617px;font-size:12px;color:#a0a0a0">3D</div>
<div class="cbtn" style="left:328px;top:613px;width:34px"></div>
<div class="cbtn" style="left:364px;top:613px;width:34px"></div>
<div class="cbtn" style="left:399px;top:613px;width:34px"></div>
<div class="a" style="left:344px;top:617px;width:9px;height:6px;border:1px solid #777;background:#f4f4f4"></div>
<div class="a" style="left:339px;top:620px;width:9px;height:7px;border:1px solid #777;background:#f4f4f4"></div>
<div class="a" style="left:342px;top:623px;width:4px;height:2px;background:#777"></div>
<div class="a" style="left:375px;top:617px;width:11px;height:9px;border:1px solid #777;background:#f4f4f4"></div>
<div class="a" style="left:378px;top:620px;width:5px;height:2px;background:#777"></div>
<svg class="a" style="left:409px;top:616px" width="13" height="11" viewBox="0 0 13 11"><path d="M2.6 2.4L10.4 8.6M10.4 2.4L2.6 8.6" stroke="#666" stroke-width="4"/><path d="M2.6 2.4L10.4 8.6M10.4 2.4L2.6 8.6" stroke="#fff" stroke-width="2.2"/></svg>
<!-- status -->
<div class="a" id="status"></div>
<div class="t" style="left:19px;top:640px;font-size:11.85px">Software ID :  89663-02G32-</div>
<div class="a" style="left:91px;top:635px;width:1px;height:18px;background:#dedede"></div>
<div class="a" id="botline"></div>
</body></html>
